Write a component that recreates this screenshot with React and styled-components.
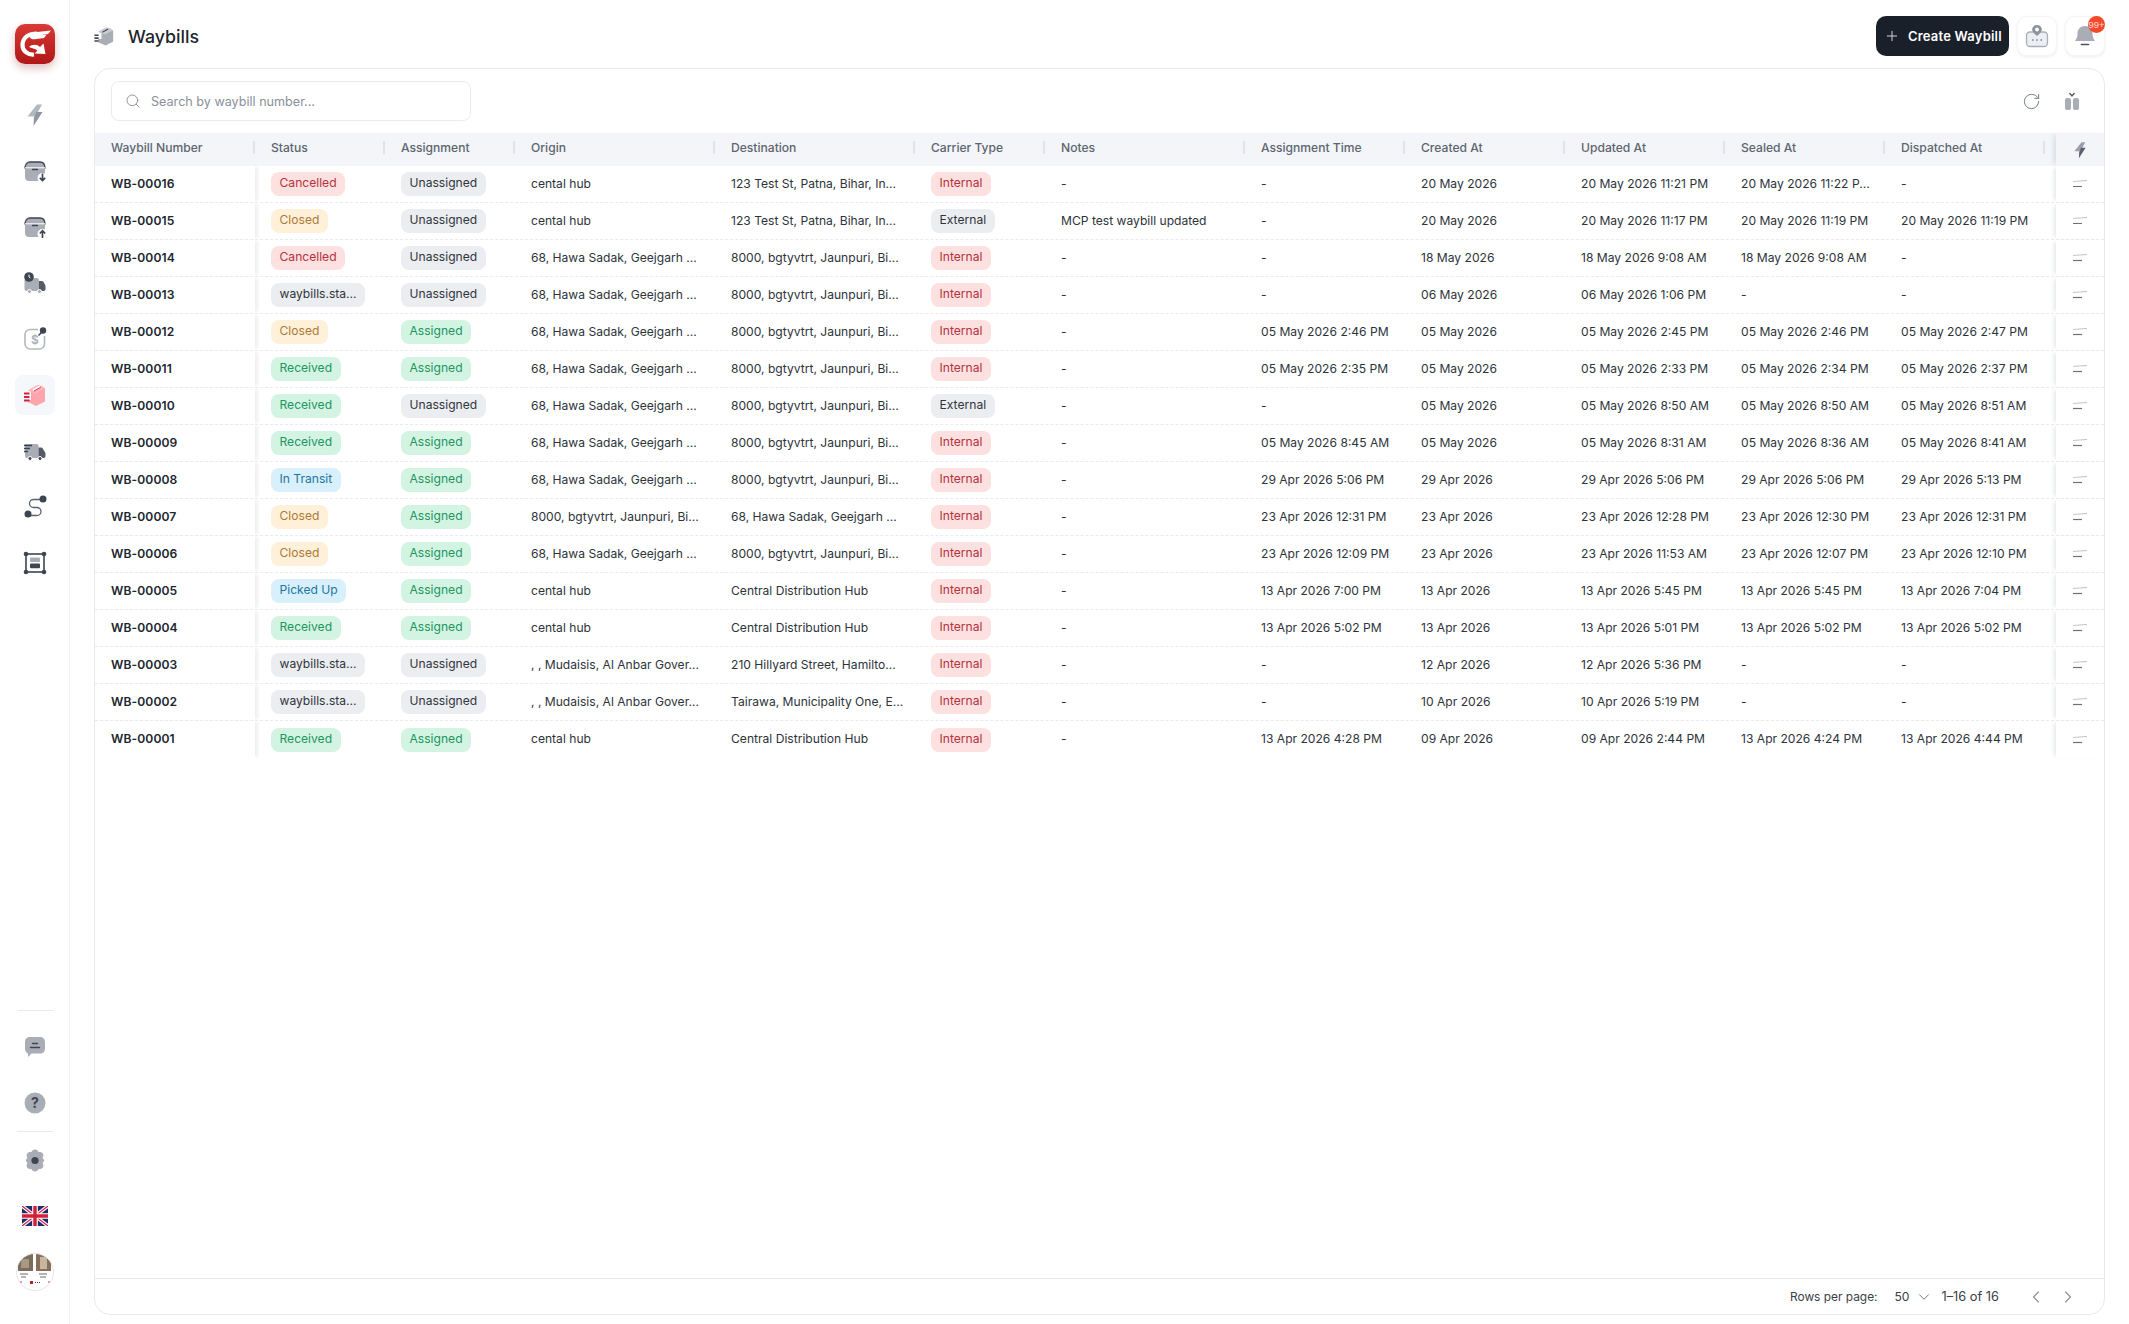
import React from "react";
import styled, { createGlobalStyle } from "styled-components";
import { Search, Plus, RotateCw, ChevronDown, ChevronLeft, ChevronRight } from "lucide-react";

const Global = createGlobalStyle`
  html, body { margin: 0; padding: 0; background: #fff; }
  body { font-family: Inter, "Liberation Sans", sans-serif; color: #2b3138; -webkit-font-smoothing: antialiased; }
  * { box-sizing: border-box; }
`;

const COLS = "160px 130px 130px 200px 200px 130px 200px 160px 160px 160px 160px 160px minmax(0, 1fr) 48px";

const Page = styled.div`
  display: flex;
  width: 2129px;
  height: 1324px;
  overflow: hidden;
`;
const Sidebar = styled.aside`
  width: 70px;
  flex: none;
  border-right: 1px solid #f0f1f3;
  box-shadow: 1px 0 3px rgba(20, 30, 50, 0.02);
  display: flex;
  flex-direction: column;
  align-items: center;
  padding-top: 24px;
`;
const Logo = styled.div`
  width: 40px;
  height: 40px;
  border-radius: 10px;
  background: linear-gradient(180deg, #d83a36 0%, #b01717 100%);
  box-shadow: 0 4px 8px rgba(140, 20, 20, 0.28);
  margin-bottom: 31px;
  display: flex;
`;
const NavItem = styled.div`
  width: 40px;
  height: 40px;
  margin-bottom: 16px;
  border-radius: 8px;
  display: flex;
  align-items: center;
  justify-content: center;
  background: ${(p) => (p.$active ? "#f5f7fa" : "transparent")};
`;
const Spacer = styled.div`
  flex: 1;
`;
const Divider = styled.div`
  width: 36px;
  height: 1px;
  background: #e8e9ec;
  margin-bottom: ${(p) => p.$after}px;
`;
const BottomItem = styled(NavItem)`
  margin-bottom: ${(p) => p.$after ?? 16}px;
`;
const Main = styled.main`
  flex: 1;
  min-width: 0;
  display: flex;
  flex-direction: column;
  padding: 0 24px 9px 24px;
`;
const TopBar = styled.header`
  height: 68px;
  flex: none;
  display: flex;
  align-items: center;
  gap: 14px;
  padding-top: 4px;
`;
const Title = styled.h1`
  margin: 0;
  font-size: 17.8px;
  font-weight: 500;
  color: #1f252c;
  flex: 1;
`;
const TopActions = styled.div`
  display: flex;
  align-items: center;
  gap: 8px;
`;
const CreateButton = styled.button`
  height: 40px;
  width: 133px;
  border: 0;
  border-radius: 10px;
  background: #1a2029;
  color: #fff;
  font: 600 13px Inter, sans-serif;
  letter-spacing: 0.2px;
  display: flex;
  align-items: center;
  gap: 8px;
  padding: 0 0 0 8px;
  white-space: nowrap;
`;
const IconButton = styled.button`
  position: relative;
  width: 40px;
  height: 40px;
  border: 1px solid #f6f6f7;
  border-radius: 10px;
  background: #fff;
  box-shadow: 0 1px 3px rgba(20, 30, 50, 0.08);
  display: flex;
  align-items: center;
  justify-content: center;
  padding: 0;
`;
const Count = styled.span`
  position: absolute;
  top: -1px;
  right: -1px;
  width: 17px;
  height: 17px;
  border-radius: 50%;
  background: #f4492c;
  color: #ffd9d2;
  font-size: 9.5px;
  line-height: 17px;
  display: flex;
  align-items: center;
  justify-content: center;
  white-space: nowrap;
`;
const Card = styled.section`
  flex: 1;
  min-height: 0;
  border: 1px solid #e8eaed;
  border-radius: 16px;
  display: flex;
  flex-direction: column;
  overflow: hidden;
`;
const Toolbar = styled.div`
  height: 64px;
  flex: none;
  display: flex;
  align-items: center;
  justify-content: space-between;
  padding: 0 24px 0 16px;
`;
const SearchBox = styled.div`
  width: 360px;
  height: 40px;
  border: 1px solid #e9ebee;
  border-radius: 8px;
  display: flex;
  align-items: center;
  gap: 10px;
  padding: 0 13px;
  color: #8a9099;
  font-size: 12.6px;
`;
const ToolIcons = styled.div`
  display: flex;
  align-items: center;
  gap: 23px;
`;
const TableArea = styled.div`
  flex: 1;
  min-height: 0;
`;
const HeadRow = styled.div`
  display: grid;
  grid-template-columns: ${COLS};
  height: 33px;
  background: #f3f5f8;
`;
const HeadCell = styled.div`
  position: relative;
  display: flex;
  align-items: center;
  padding: 0 0 4px 16px;
  font-size: 12.1px;
  font-weight: 500;
  color: #5d6570;
  white-space: nowrap;
  &::after {
    content: "";
    position: absolute;
    right: 0;
    top: 8px;
    width: 2px;
    height: 13px;
    background: #dfe3e8;
  }
`;
const HeadFiller = styled.div`
  min-width: 0;
`;
const ActionHead = styled.div`
  display: flex;
  align-items: center;
  justify-content: center;
  box-shadow: -5px 0 4px -2px #dfe2e7;
`;
const Row = styled.div`
  display: grid;
  grid-template-columns: ${COLS};
  height: 37px;
  border-bottom: ${(p) => (p.$last ? "0" : "1px dashed #e8eaed")};
`;
const Cell = styled.div`
  display: flex;
  align-items: center;
  padding: 0 0 2px 16px;
  font-size: 12.1px;
  color: #2d333a;
  white-space: nowrap;
  overflow: hidden;
`;
const BadgeCell = styled(Cell)`
  padding-bottom: 0;
`;
const NumberCell = styled(Cell)`
  overflow: visible;
  font-weight: 600;
  letter-spacing: 0.1px;
  color: #20262d;
  box-shadow: 4px 0 3px -1px #eef0f2;
`;
const ActionCell = styled.div`
  display: flex;
  align-items: center;
  justify-content: center;
  box-shadow: -4px 0 4px -2px #e6e8eb;
  background: #fff;
`;
const TONES = {
  red: ["#fde0e0", "#b3323c"],
  orange: ["#fff0da", "#ad7a32"],
  green: ["#d4f4e3", "#21955f"],
  blue: ["#d8f0fb", "#1d769f"],
  gray: ["#ebedf0", "#2f353c"],
};
const Badge = styled.span`
  display: inline-block;
  height: 24px;
  line-height: 22px;
  padding: 0 8.5px;
  border-radius: 8px;
  font-size: 12.1px;
  background: ${(p) => TONES[p.$tone][0]};
  color: ${(p) => TONES[p.$tone][1]};
`;
const Footer = styled.footer`
  height: 36px;
  flex: none;
  border-top: 1px solid #e8eaed;
  display: flex;
  align-items: center;
  justify-content: flex-end;
  padding-right: 26px;
  font-size: 11.9px;
  color: #3a4048;
`;
const RowsSelect = styled.span`
  display: flex;
  align-items: center;
  gap: 5px;
  margin: 0 9px 0 17px;
  font-size: 12.1px;
`;
const PageRange = styled.span`
  font-size: 12.8px;
`;
const Pager = styled.span`
  display: flex;
  align-items: center;
  gap: 12px;
  margin-left: 27px;
  color: #8d939b;
`;

const STATUS_TONE = {
  Cancelled: "red",
  Closed: "orange",
  Received: "green",
  "In Transit": "blue",
  "Picked Up": "blue",
  "waybills.sta...": "gray",
};
const A = "68, Hawa Sadak, Geejgarh ...";
const B = "8000, bgtyvtrt, Jaunpuri, Bi...";
const C = "123 Test St, Patna, Bihar, In...";
const H = "Central Distribution Hub";
const W = "waybills.sta...";
const rows = [
  ["WB-00016", "Cancelled", "Unassigned", "cental hub", C, "Internal", "-", "-", "20 May 2026", "20 May 2026 11:21 PM", "20 May 2026 11:22 P...", "-"],
  ["WB-00015", "Closed", "Unassigned", "cental hub", C, "External", "MCP test waybill updated", "-", "20 May 2026", "20 May 2026 11:17 PM", "20 May 2026 11:19 PM", "20 May 2026 11:19 PM"],
  ["WB-00014", "Cancelled", "Unassigned", A, B, "Internal", "-", "-", "18 May 2026", "18 May 2026 9:08 AM", "18 May 2026 9:08 AM", "-"],
  ["WB-00013", W, "Unassigned", A, B, "Internal", "-", "-", "06 May 2026", "06 May 2026 1:06 PM", "-", "-"],
  ["WB-00012", "Closed", "Assigned", A, B, "Internal", "-", "05 May 2026 2:46 PM", "05 May 2026", "05 May 2026 2:45 PM", "05 May 2026 2:46 PM", "05 May 2026 2:47 PM"],
  ["WB-00011", "Received", "Assigned", A, B, "Internal", "-", "05 May 2026 2:35 PM", "05 May 2026", "05 May 2026 2:33 PM", "05 May 2026 2:34 PM", "05 May 2026 2:37 PM"],
  ["WB-00010", "Received", "Unassigned", A, B, "External", "-", "-", "05 May 2026", "05 May 2026 8:50 AM", "05 May 2026 8:50 AM", "05 May 2026 8:51 AM"],
  ["WB-00009", "Received", "Assigned", A, B, "Internal", "-", "05 May 2026 8:45 AM", "05 May 2026", "05 May 2026 8:31 AM", "05 May 2026 8:36 AM", "05 May 2026 8:41 AM"],
  ["WB-00008", "In Transit", "Assigned", A, B, "Internal", "-", "29 Apr 2026 5:06 PM", "29 Apr 2026", "29 Apr 2026 5:06 PM", "29 Apr 2026 5:06 PM", "29 Apr 2026 5:13 PM"],
  ["WB-00007", "Closed", "Assigned", B, "68, Hawa Sadak, Geejgarh ...", "Internal", "-", "23 Apr 2026 12:31 PM", "23 Apr 2026", "23 Apr 2026 12:28 PM", "23 Apr 2026 12:30 PM", "23 Apr 2026 12:31 PM"],
  ["WB-00006", "Closed", "Assigned", A, B, "Internal", "-", "23 Apr 2026 12:09 PM", "23 Apr 2026", "23 Apr 2026 11:53 AM", "23 Apr 2026 12:07 PM", "23 Apr 2026 12:10 PM"],
  ["WB-00005", "Picked Up", "Assigned", "cental hub", H, "Internal", "-", "13 Apr 2026 7:00 PM", "13 Apr 2026", "13 Apr 2026 5:45 PM", "13 Apr 2026 5:45 PM", "13 Apr 2026 7:04 PM"],
  ["WB-00004", "Received", "Assigned", "cental hub", H, "Internal", "-", "13 Apr 2026 5:02 PM", "13 Apr 2026", "13 Apr 2026 5:01 PM", "13 Apr 2026 5:02 PM", "13 Apr 2026 5:02 PM"],
  ["WB-00003", W, "Unassigned", ", , Mudaisis, Al Anbar Gover...", "210 Hillyard Street, Hamilto...", "Internal", "-", "-", "12 Apr 2026", "12 Apr 2026 5:36 PM", "-", "-"],
  ["WB-00002", W, "Unassigned", ", , Mudaisis, Al Anbar Gover...", "Tairawa, Municipality One, E...", "Internal", "-", "-", "10 Apr 2026", "10 Apr 2026 5:19 PM", "-", "-"],
  ["WB-00001", "Received", "Assigned", "cental hub", H, "Internal", "-", "13 Apr 2026 4:28 PM", "09 Apr 2026", "09 Apr 2026 2:44 PM", "13 Apr 2026 4:24 PM", "13 Apr 2026 4:44 PM"],
];
const heads = ["Waybill Number", "Status", "Assignment", "Origin", "Destination", "Carrier Type", "Notes", "Assignment Time", "Created At", "Updated At", "Sealed At", "Dispatched At"];

const G1 = "#a9aeb6";
const D1 = "#3e4552";

const Svg = ({ children, size = 24, ...r }) => (
  <svg width={size} height={size} viewBox="0 0 24 24" fill="none" {...r}>{children}</svg>
);
const BoltIcon = ({ size = 24, light = "#b3b7be", dark = "#9097a1" }) => (
  <Svg size={size}>
    <path d="M14 1.500 4.500 13.500h8L19 1.500h-5Z" fill={light} />
    <path d="M4.500 13.500h6.500L10.500 23l9-14h-6.500l-1 4.500H4.500Z" fill={dark} />
  </Svg>
);
const BoxArrow = ({ up }) => (
  <Svg>
    <rect x="2" y="3" width="20" height="19" rx="4" fill={G1} />
    <path d="M2 9.500C2 5 4.500 3 7 3h10c2.500 0 5 2 5 6.500" stroke={D1} strokeWidth="1.300" />
    <path d="M2 8.800h20" stroke="#fff" strokeWidth="1" />
    <path d="M9.500 10.500h5" stroke={D1} strokeWidth="1.400" strokeLinecap="round" />
    <circle cx="19.500" cy="19" r="5" fill="#fff" />
    {up ? (
      <path d="M19.500 23v-7M16.800 18.500l2.700-2.800 2.700 2.800" stroke={D1} strokeWidth="1.700" />
    ) : (
      <path d="M19.500 14.500v7M16.800 18.800l2.700 2.800 2.700-2.800" stroke={D1} strokeWidth="1.700" />
    )}
  </Svg>
);
const TruckClock = () => (
  <Svg>
    <rect x="1.500" y="7" width="14.500" height="13" rx="2.500" fill={G1} />
    <path d="M16 10h2.500c1 0 1.700.5 2.200 1.300l1.500 2.700c.3.500.3 1 .3 1.500V18c0 1.200-.8 2-2 2H16V10Z" fill={D1} opacity=".88" />
    <circle cx="6" cy="6" r="4.800" fill={D1} />
    <path d="M6 3.600V6l1.400 1" stroke="#fff" strokeWidth="1" />
    <circle cx="6.500" cy="20.500" r="2" fill={G1} stroke="#fff" strokeWidth="1" />
    <circle cx="16.500" cy="20.500" r="2" fill={G1} stroke="#fff" strokeWidth="1" />
  </Svg>
);
const MoneyIcon = () => (
  <Svg>
    <path d="M15 2.500H7a5 5 0 0 0-5 5v9.500a5 5 0 0 0 5 5h9.500a5 5 0 0 0 5-5V9" stroke="#b4b8bf" strokeWidth="1.600" />
    <text x="12" y="17" textAnchor="middle" fontSize="12" fontWeight="600" fontFamily="Inter" fill="#a9aeb6">$</text>
    <circle cx="20" cy="3.500" r="3.200" fill={D1} />
    <path d="M15.500 8.500 19 5" stroke={D1} strokeWidth="1.400" />
  </Svg>
);
const ParcelActive = () => (
  <Svg>
    <path d="M5 7.500 15 2l7 3.500v13L13 23l-8-4v-2h3V8.500L5 7.500Z" fill="#fda4ac" />
    <path d="M6 7.500c1-1.600 7-5 9-5.300 2.400-.2 6 1.600 7 3.300-3 1.300-6.500 3.300-8.800 4.600C11 10 7 8.800 6 7.500Z" fill="#fdb7bc" />
    <path d="M10 7.400 17 3.400" stroke="#fff" strokeWidth="2.200" />
    <path d="M10 7.400 17 3.400" stroke="#c81e3a" strokeWidth=".9" transform="translate(.8 .8)" />
    <path d="M1 10.500h5.500M1 14h5.500M1 17.500h5.500" stroke="#d0243d" strokeWidth="1.900" />
  </Svg>
);
const FastTruck = () => (
  <Svg>
    <path d="M3 5h10.500a2 2 0 0 1 2 2v12H4a2 2 0 0 1-2-2V5Z" fill={G1} />
    <path d="M15.500 8.500h2.300c.9 0 1.700.5 2.100 1.200l2.400 4.100c.2.400.2.800.2 1.200V17a2 2 0 0 1-2 2h-5V8.500Z" fill={D1} opacity=".88" />
    <path d="M1 6.500h8M1 9.500h6M1 12.500h4" stroke={D1} strokeWidth="1.300" />
    <circle cx="7" cy="19.500" r="2" fill={D1} stroke="#fff" strokeWidth="1" />
    <circle cx="17" cy="19.500" r="2" fill={D1} stroke="#fff" strokeWidth="1" />
  </Svg>
);
const RouteIcon = () => (
  <Svg>
    <path d="M19 4.500h-8.500a4 4 0 0 0 0 8h3.500a4 4 0 0 1 0 8H6" stroke="#5b6270" strokeWidth="1.300" fill="none" />
    <circle cx="20" cy="4" r="3.500" fill={D1} />
    <circle cx="5" cy="19" r="3.500" fill={D1} />
  </Svg>
);
const FrameIcon = () => (
  <Svg>
    <rect x="3" y="3" width="18" height="18" stroke={D1} strokeWidth="1.600" />
    <circle cx="3" cy="3" r="2.300" fill={D1} />
    <circle cx="21" cy="3" r="2.300" fill={D1} />
    <circle cx="3" cy="21" r="2.300" fill={D1} />
    <circle cx="21" cy="21" r="2.300" fill={D1} />
    <rect x="7" y="6.500" width="10" height="4.600" rx="1" fill={G1} />
    <rect x="7" y="12.600" width="10" height="4.600" rx="1" fill={D1} />
  </Svg>
);
const ChatIcon = () => (
  <Svg>
    <path d="M7 2h10c3 0 5 2 5 5v6.500c0 3-2 5-5 5h-8.500L5 22v-3.600c-2-.7-3-2.400-3-4.900V7c0-3 2-5 5-5Z" fill={G1} />
    <path d="M9.500 8.500h5M7.500 12.500h9" stroke={D1} strokeWidth="1.400" strokeLinecap="round" />
  </Svg>
);
const HelpIcon = () => (
  <Svg>
    <circle cx="12" cy="12" r="10.500" fill={G1} />
    <text x="12" y="17" textAnchor="middle" fontSize="14" fontWeight="700" fontFamily="Inter" fill={D1}>?</text>
  </Svg>
);
const GearIcon = () => (
  <Svg>
    <path d="M12 1.500c2 0 3 1.400 3.700 2.500 1.200 0 3-.2 4.200 1.600 1.100 1.900.2 3.500-.4 4.400.6.900 1.700 1.400 1.700 2.500s-1.100 1.600-1.700 2.500c.6 1 1.500 2.600.4 4.400-1.200 1.800-3 1.600-4.200 1.600-.7 1.100-1.700 2.500-3.700 2.500s-3-1.400-3.700-2.500c-1.200 0-3 .2-4.200-1.600-1.100-1.800-.2-3.400.4-4.400C3.900 14.100 2.800 13.600 2.800 12.500s1.100-1.600 1.700-2.500c-.6-.9-1.500-2.500-.4-4.400C5.300 3.800 7.100 4 8.300 4 9 2.900 10 1.500 12 1.500Z" fill={G1} />
    <circle cx="12" cy="12.500" r="3.600" fill={D1} />
  </Svg>
);
const Flag = () => (
  <svg width="26" height="20" viewBox="0 0 60 46">
    <rect width="60" height="46" fill="#1d2a6d" />
    <path d="M0 0 60 46M60 0 0 46" stroke="#fff" strokeWidth="8" />
    <path d="M0 0 60 46M60 0 0 46" stroke="#d3203a" strokeWidth="3" />
    <path d="M30 0v46M0 23h60" stroke="#fff" strokeWidth="13" />
    <path d="M30 0v46M0 23h60" stroke="#d3203a" strokeWidth="8" />
  </svg>
);
const Avatar = () => (
  <svg width="38" height="38" viewBox="0 0 38 38">
    <defs>
      <clipPath id="av"><circle cx="19" cy="19" r="18.500" /></clipPath>
    </defs>
    <g clipPath="url(#av)">
      <rect width="38" height="38" fill="#fff" />
      <rect x="2" y="0" width="15" height="18" fill="#7b6c5c" />
      <rect x="5" y="6" width="8" height="9" fill="#a79783" />
      <rect x="20" y="0" width="15" height="18" fill="#8a6f58" />
      <rect x="24" y="4" width="7" height="12" fill="#c5b6a2" />
      <path d="M4 21h8M5 24h5M23 21h8M24 24h6" stroke="#444" strokeWidth=".8" />
      <rect x="14" y="28" width="3" height="3" fill="#b3202a" />
      <path d="M19 29.500h5" stroke="#444" strokeWidth="1" strokeDasharray="1 1" />
      <circle cx="5" cy="29" r=".8" fill="#b3202a" />
      <circle cx="33" cy="29" r=".8" fill="#b3202a" />
    </g>
    <circle cx="19" cy="19" r="18.500" fill="none" stroke="#e5e6e8" />
  </svg>
);
const GLogo = () => (
  <svg width="40" height="40" viewBox="0 0 40 40" fill="none">
    <path d="M22 9.500C13 9.500 7.500 14 7.500 21c0 6 5 10 11.500 9.500" stroke="#fff" strokeWidth="4.200" />
    <path d="M13 9 36 6.500l-3 3.500-8 1.200 6.500-.4-2.500 3.200-9 1.200C17 16 14 14 13 9Z" fill="#fff" />
    <path d="M14 23c3-3 8-3 11 0l3.500-3.500 2 10.500-11-.5 3-3c-2.500-2-6-2.500-8.500-3.500Z" fill="#fff" />
  </svg>
);
const PageBox = () => (
  <svg width="20" height="20" viewBox="0 0 24 24" fill="none">
    <path d="M5 7 15.500 2 23 5.500v13L14 23.500 5 19.500v-4h4V8L5 7Z" fill="#a9aeb5" />
    <path d="M5.500 7c1.500-1.500 7-4.800 10-5.200C18 1.800 22 3.600 23 5.500c-3 1.300-6.500 3-9 4.500C11 10 6.500 8.500 5.500 7Z" fill="#c9ccd0" />
    <path d="M10 7.500 17 3.500" stroke="#444b57" strokeWidth="1.400" />
    <path d="M.5 11h5M.5 14.500h5M.5 18h5" stroke="#3e4552" strokeWidth="1.900" />
  </svg>
);
const PinBox = () => (
  <svg width="24" height="24" viewBox="0 0 24 24" fill="none">
    <rect x="1.500" y="8" width="21" height="14.500" rx="3.500" fill="#eceef1" stroke="#a9aeb6" strokeWidth="1.300" />
    <path d="M7 16h1.500M11.200 16h1.500M15.500 16h1.500" stroke="#7d838c" strokeWidth="1.300" />
    <path d="M12 1c2.800 0 4.800 2 4.800 4.600 0 2.500-2.600 4.700-4.800 6.400-2.200-1.700-4.800-3.900-4.800-6.400C7.200 3 9.200 1 12 1Z" fill="#8d939c" />
    <circle cx="12" cy="5.500" r="1.900" fill="#fff" />
  </svg>
);
const Bell = () => (
  <svg width="24" height="24" viewBox="0 0 24 24" fill="none">
    <path d="M12 2c4.600 0 7.500 3.400 7.500 7.600 0 4 1.300 5.400 2.500 7.400H2c1.200-2 2.500-3.400 2.500-7.400C4.500 5.400 7.400 2 12 2Z" fill="#a9aeb6" />
    <path d="M8.500 20.500h7" stroke="#4a515d" strokeWidth="1.600" strokeLinecap="round" />
  </svg>
);
const ColumnsIcon = () => (
  <svg width="16" height="18" viewBox="0 0 16 18" fill="none">
    <rect x="1" y="6" width="6" height="12" rx="2" fill="#a9aeb6" />
    <rect x="9" y="6" width="6" height="12" rx="2" fill="#a9aeb6" />
    <path d="M5.500 1 8 4l2.500-3" stroke="#4a515d" strokeWidth="1.200" />
  </svg>
);
const LinesIcon = () => (
  <svg width="16" height="8" viewBox="0 0 16 8" fill="none">
    <path d="M1 1.500 15 .5" stroke="#c3c7cc" strokeWidth="1.200" />
    <path d="M1 6.500h9" stroke="#6a717b" strokeWidth="1.200" />
  </svg>
);

const navs = [
  <BoltIcon key="a" />, <BoxArrow key="b" />, <BoxArrow key="c" up />, <TruckClock key="d" />,
  <MoneyIcon key="e" />, <ParcelActive key="f" />, <FastTruck key="g" />, <RouteIcon key="h" />, <FrameIcon key="i" />,
];

const badgeTone = (t) => (t === "Assigned" ? "green" : "gray");

export default function App() {
  return (
    <Page>
      <Global />
      <Sidebar>
        <Logo><GLogo /></Logo>
        {navs.map((n, i) => (
          <NavItem key={i} $active={i === 5}>{n}</NavItem>
        ))}
        <Spacer />
        <Divider $after={16} />
        <BottomItem><ChatIcon /></BottomItem>
        <BottomItem $after={8}><HelpIcon /></BottomItem>
        <Divider $after={8} />
        <BottomItem><GearIcon /></BottomItem>
        <BottomItem><Flag /></BottomItem>
        <BottomItem $after={32}><Avatar /></BottomItem>
      </Sidebar>
      <Main>
        <TopBar>
          <PageBox />
          <Title>Waybills</Title>
          <TopActions>
            <CreateButton><Plus size={16} strokeWidth={1.5} color="#cfd3d8" />Create Waybill</CreateButton>
            <IconButton><PinBox /></IconButton>
            <IconButton><Bell /><Count>99+</Count></IconButton>
          </TopActions>
        </TopBar>
        <Card>
          <Toolbar>
            <SearchBox><Search size={16} strokeWidth={1.2} color="#757c86" />Search by waybill number...</SearchBox>
            <ToolIcons>
              <RotateCw size={19} strokeWidth={1.2} color="#6f7680" />
              <ColumnsIcon />
            </ToolIcons>
          </Toolbar>
          <TableArea>
            <HeadRow>
              {heads.map((h) => (<HeadCell key={h}>{h}</HeadCell>))}
              <HeadFiller />
              <ActionHead><BoltIcon size={18} light="#9aa0a8" dark="#59616d" /></ActionHead>
            </HeadRow>
            {rows.map((r, i) => (
              <Row key={r[0]} $last={i === rows.length - 1}>
                <NumberCell>{r[0]}</NumberCell>
                <BadgeCell><Badge $tone={STATUS_TONE[r[1]]}>{r[1]}</Badge></BadgeCell>
                <BadgeCell><Badge $tone={badgeTone(r[2])}>{r[2]}</Badge></BadgeCell>
                <Cell>{r[3]}</Cell>
                <Cell>{r[4]}</Cell>
                <BadgeCell><Badge $tone={r[5] === "Internal" ? "red" : "gray"}>{r[5]}</Badge></BadgeCell>
                {r.slice(6).map((v, k) => (<Cell key={k}>{v}</Cell>))}
                <HeadFiller />
                <ActionCell><LinesIcon /></ActionCell>
              </Row>
            ))}
          </TableArea>
          <Footer>
            Rows per page:
            <RowsSelect>50<ChevronDown size={18} strokeWidth={1.2} color="#5e6570" /></RowsSelect>
            <PageRange>1–16 of 16</PageRange>
            <Pager><ChevronLeft size={20} strokeWidth={1.4} /><ChevronRight size={20} strokeWidth={1.4} /></Pager>
          </Footer>
        </Card>
      </Main>
    </Page>
  );
}
